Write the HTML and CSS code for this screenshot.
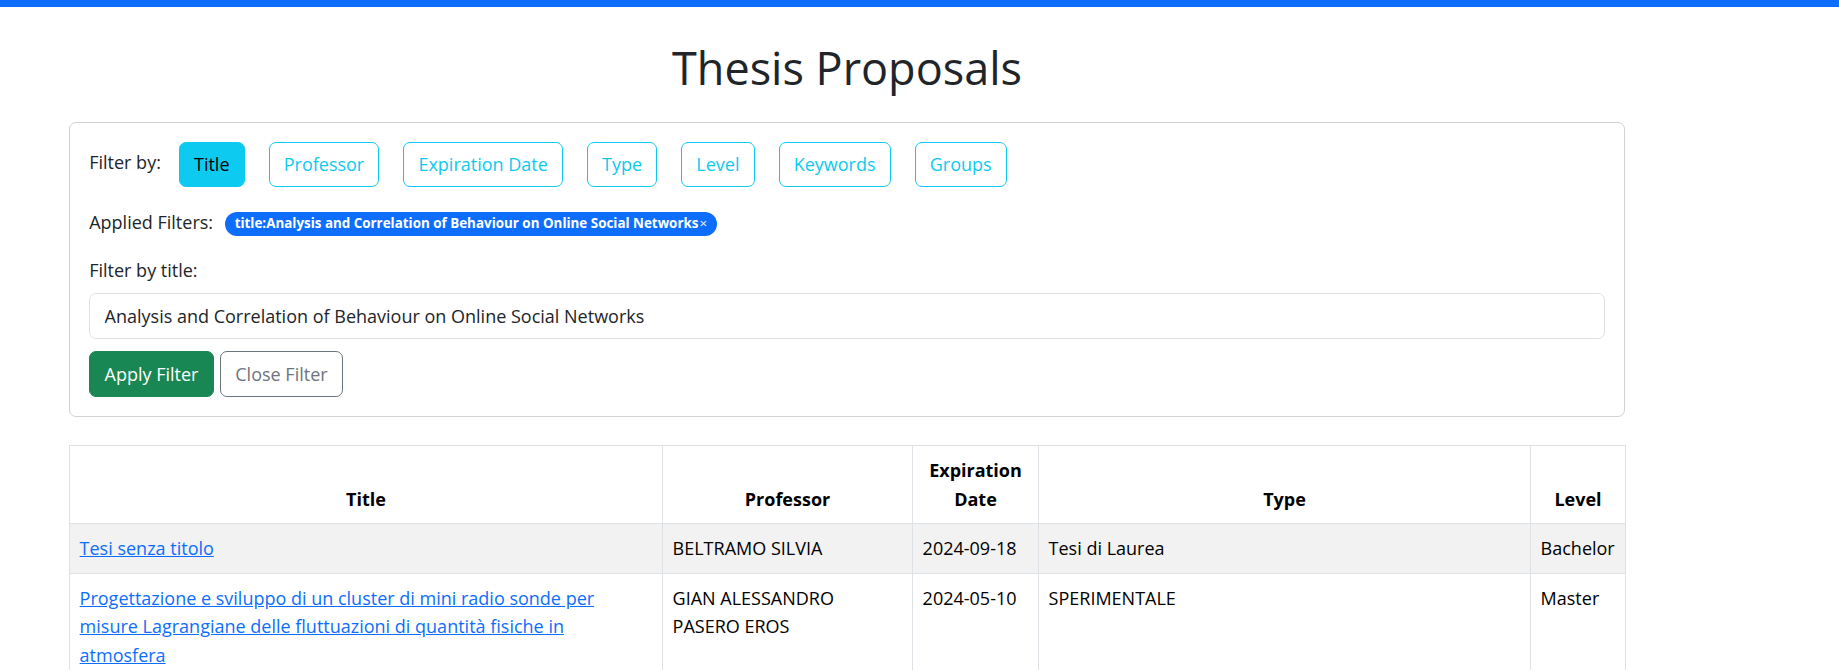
FILE: index.html
```html
<!DOCTYPE html>
<html lang="en">
<head>
<meta charset="utf-8">
<title>Thesis Proposals</title>
<link rel="stylesheet" href="styles.css">
</head>
<body>
<div class="topbar"></div>
<main class="page">
  <h1 class="page-title">Thesis Proposals</h1>

  <section class="filter-card">
    <div class="filter-row">
      <span class="filter-label">Filter by:</span>
      <button class="btn btn-info">Title</button>
      <button class="btn btn-outline-info">Professor</button>
      <button class="btn btn-outline-info">Expiration Date</button>
      <button class="btn btn-outline-info">Type</button>
      <button class="btn btn-outline-info">Level</button>
      <button class="btn btn-outline-info">Keywords</button>
      <button class="btn btn-outline-info">Groups</button>
    </div>

    <div class="applied-row">
      <span>Applied Filters:</span>
      <span class="badge">title:Analysis and Correlation of Behaviour on Online Social Networks<span class="badge-close">×</span></span>
    </div>

    <label class="title-label" for="title-filter">Filter by title:</label>
    <input id="title-filter" class="text-input" type="text" value="Analysis and Correlation of Behaviour on Online Social Networks">

    <div class="actions">
      <button class="btn btn-success">Apply Filter</button>
      <button class="btn btn-outline-secondary">Close Filter</button>
    </div>
  </section>

  <table class="proposals">
    <colgroup>
      <col class="c-title">
      <col class="c-prof">
      <col class="c-date">
      <col class="c-type">
      <col class="c-level">
    </colgroup>
    <thead>
      <tr>
        <th>Title</th>
        <th>Professor</th>
        <th>Expiration Date</th>
        <th>Type</th>
        <th>Level</th>
      </tr>
    </thead>
    <tbody>
      <tr>
        <td><a href="#">Tesi senza titolo</a></td>
        <td>BELTRAMO SILVIA</td>
        <td>2024-09-18</td>
        <td>Tesi di Laurea</td>
        <td>Bachelor</td>
      </tr>
      <tr>
        <td><a href="#">Progettazione e sviluppo di un cluster di mini radio sonde per misure Lagrangiane delle fluttuazioni di quantità fisiche in atmosfera</a></td>
        <td>GIAN ALESSANDRO PASERO EROS</td>
        <td>2024-05-10</td>
        <td>SPERIMENTALE</td>
        <td>Master</td>
      </tr>
    </tbody>
  </table>
</main>
</body>
</html>
```

FILE: styles.css
```css
html, body {
  margin: 0;
  padding: 0;
  background: #fff;
}

body {
  font-family: "Open Sans", "Noto Sans", sans-serif;
  font-size: 18px;
  line-height: 28.8px;
  color: #212529;
}

.topbar {
  height: 7px;
  background: #0d6efd;
}

.page {
  width: 1556px;
  margin-left: 69px;
}

.page-title {
  margin: 32px 0 25px;
  font-size: 45px;
  line-height: 57.6px;
  font-weight: 400;
  text-align: center;
  color: #212529;
}

.filter-card {
  border: 1px solid #d2d2d2;
  border-radius: 7px;
  padding: 19.2px 19.2px 19px;
}

.filter-row {
  display: flex;
  align-items: center;
}

.filter-label {
  margin-right: 18px;
  position: relative;
  top: -2px;
}

.btn {
  font-family: inherit;
  font-size: 18px;
  line-height: 28.8px;
  padding: 7.4px 14.1px;
  border: 1px solid transparent;
  border-radius: 7px;
  background: #fff;
  cursor: pointer;
}

.btn-info {
  background: #0dcaf0;
  border-color: #0dcaf0;
  color: #000;
}

.btn-outline-info {
  color: #0dcaf0;
  border-color: #0dcaf0;
  background: #fff;
}

.filter-row .btn + .btn {
  margin-left: 24px;
}

.applied-row {
  margin-top: 20.5px;
  display: flex;
  align-items: center;
  gap: 12px;
}

.badge {
  display: inline-block;
  position: relative;
  top: 1.4px;
  background: #0d6efd;
  color: #fff;
  font-size: 13.4px;
  font-weight: 700;
  line-height: 1;
  padding: 5.3px 9.6px;
  border-radius: 999px;
  white-space: nowrap;
}

.badge-close {
  font-weight: 400;
  margin-left: 1px;
}

.title-label {
  display: block;
  margin-top: 19.2px;
  margin-bottom: 8.8px;
}

.text-input {
  display: block;
  width: 100%;
  box-sizing: border-box;
  font-family: inherit;
  font-size: 18px;
  line-height: 28.8px;
  padding: 7.4px 14.4px;
  border: 1px solid #dee2e6;
  border-radius: 7px;
  color: #212529;
  background: #fff;
}

.actions {
  margin-top: 12.4px;
  display: flex;
  gap: 6px;
}

.actions .btn {
  padding-left: 14.4px;
  padding-right: 14.4px;
}

.btn-success {
  background: #198754;
  border-color: #198754;
  color: #fff;
}

.btn-outline-secondary {
  background: #fff;
  border-color: #6c757d;
  color: #6c757d;
}

.proposals {
  margin-top: 28.1px;
  width: 100%;
  border-collapse: collapse;
  table-layout: fixed;
  color: #000;
}

.c-title { width: 593px; }
.c-prof { width: 250px; }
.c-date { width: 126px; }
.c-type { width: 492px; }
.c-level { width: 95px; }

.proposals th,
.proposals td {
  border: 1px solid #dee2e6;
  padding: 10px 9.6px 9.6px;
  vertical-align: top;
  text-align: left;
  overflow: visible;
}

.proposals th {
  vertical-align: bottom;
  text-align: center;
  font-weight: 700;
}

.proposals tbody tr:nth-child(odd) td {
  background: #f2f2f2;
}

.proposals a {
  color: #0d6efd;
  text-decoration: underline;
}
```
